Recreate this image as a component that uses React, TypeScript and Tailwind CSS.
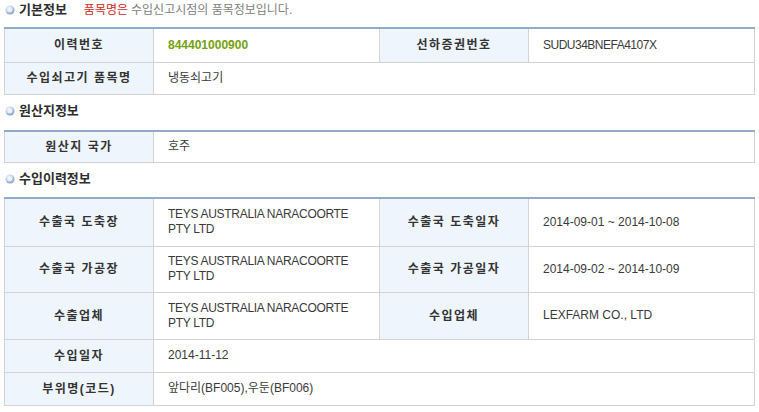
import React from "react";

const font = { fontFamily: '"Liberation Sans", "Noto Sans CJK KR", sans-serif' };

const Bullet = () => (
  <svg width="10" height="10" viewBox="0 0 10 10" className="mr-[4px] shrink-0">
    <defs>
      <radialGradient id="bl" cx="40%" cy="35%" r="65%">
        <stop offset="0%" stopColor="#ffffff" />
        <stop offset="55%" stopColor="#c9d8ea" />
        <stop offset="100%" stopColor="#7f9cc2" />
      </radialGradient>
    </defs>
    <circle cx="5" cy="5" r="4.5" fill="url(#bl)" />
    <circle cx="5" cy="5" r="2" fill="#eef3fa" />
  </svg>
);

const SectionTitle = ({ title, children, className = "" }: { title: string; children?: React.ReactNode; className?: string }) => (
  <div className={"flex h-[20px] items-center pl-[1px] " + className}>
    <Bullet />
    <span className="text-[13px] font-bold tracking-[0px] text-[#2e2e2e]">{title}</span>
    {children}
  </div>
);

const Th = ({ children }: { children: React.ReactNode }) => (
  <th className="border border-[#d3d3d3] bg-[#eff5fc] text-center text-[12px] font-bold tracking-[1.5px] text-[#333]">
    {children}
  </th>
);

const Td = ({ children, colSpan, className = "" }: { children?: React.ReactNode; colSpan?: number; className?: string }) => (
  <td
    colSpan={colSpan}
    className={"border border-[#d3d3d3] pl-[14px] pr-[24px] text-left text-[12px] leading-[15px] text-[#3a3a3a] " + className}
  >
    {children}
  </td>
);

const Cols = () => (
  <colgroup>
    <col className="w-[149px]" />
    <col className="w-[226px]" />
    <col className="w-[149px]" />
    <col className="w-[226px]" />
  </colgroup>
);

const tableCls = "w-[750px] table-fixed border-collapse border-t-2 border-t-[#93aacb]";

export default function App() {
  return (
    <div className="h-[412px] w-[759px] overflow-hidden bg-white pl-[4px]" style={font}>
      <SectionTitle title="기본정보" className="mb-[7px]">
        <span className="ml-[17px] text-[12px] text-[#d4261c]">품목명은</span>
        <span className="ml-[3px] text-[12px] text-[#808080]">수입신고시점의 품목정보입니다.</span>
      </SectionTitle>
      <table className={tableCls}>
        <Cols />
        <tbody>
          <tr className="h-[34px]">
            <Th>이력번호</Th>
            <Td className="font-bold text-[#74a10c]">844401000900</Td>
            <Th>선하증권번호</Th>
            <Td className="tracking-[-0.5px]">SUDU34BNEFA4107X</Td>
          </tr>
          <tr className="h-[32px]">
            <Th>수입쇠고기 품목명</Th>
            <Td colSpan={3}>냉동쇠고기</Td>
          </tr>
        </tbody>
      </table>

      <SectionTitle title="원산지정보" className="mb-[9px] mt-[6px]" />
      <table className={tableCls}>
        <Cols />
        <tbody>
          <tr className="h-[32px]">
            <Th>원산지 국가</Th>
            <Td colSpan={3}>호주</Td>
          </tr>
        </tbody>
      </table>

      <SectionTitle title="수입이력정보" className="mb-[8px] mt-[6px]" />
      <table className={tableCls}>
        <Cols />
        <tbody>
          <tr className="h-[48px]">
            <Th>수출국 도축장</Th>
            <Td className="tracking-[-0.3px]">TEYS AUSTRALIA NARACOORTE PTY LTD</Td>
            <Th>수출국 도축일자</Th>
            <Td>2014-09-01 ~ 2014-10-08</Td>
          </tr>
          <tr className="h-[46px]">
            <Th>수출국 가공장</Th>
            <Td className="tracking-[-0.3px]">TEYS AUSTRALIA NARACOORTE PTY LTD</Td>
            <Th>수출국 가공일자</Th>
            <Td>2014-09-02 ~ 2014-10-09</Td>
          </tr>
          <tr className="h-[47px]">
            <Th>수출업체</Th>
            <Td className="tracking-[-0.3px]">TEYS AUSTRALIA NARACOORTE PTY LTD</Td>
            <Th>수입업체</Th>
            <Td>LEXFARM CO., LTD</Td>
          </tr>
          <tr className="h-[33px]">
            <Th>수입일자</Th>
            <Td colSpan={3}>2014-11-12</Td>
          </tr>
          <tr className="h-[33px]">
            <Th>부위명(코드)</Th>
            <Td colSpan={3}>앞다리(BF005),우둔(BF006)</Td>
          </tr>
        </tbody>
      </table>
    </div>
  );
}
